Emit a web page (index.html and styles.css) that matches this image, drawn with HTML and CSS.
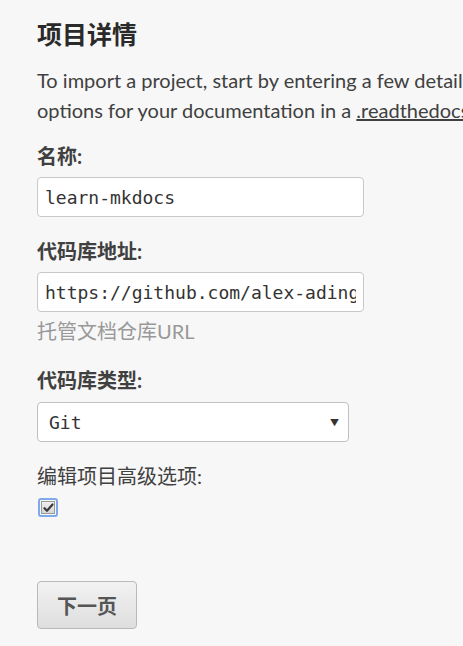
FILE: index.html
```html
<!DOCTYPE html>
<html lang="zh">
<head>
<meta charset="utf-8">
<title>项目详情</title>
<link rel="stylesheet" href="styles.css">
</head>
<body>
<main class="page">
  <h2 class="title">项目详情</h2>
  <p class="intro">To import a project, start by entering a few details about your repository. You can configure additional<br>options for your documentation in a <a href="#" class="link">.readthedocs.yaml</a> file later on.</p>

  <form class="form">
    <div class="field">
      <label class="label" for="name">名称:</label>
      <input class="input" id="name" type="text" value="learn-mkdocs">
    </div>

    <div class="field">
      <label class="label" for="repo">代码库地址:</label>
      <input class="input" id="repo" type="text" value="https://github.com/alex-adinger/learn-mkdocs">
      <span class="help">托管文档仓库URL</span>
    </div>

    <div class="field">
      <label class="label" for="type">代码库类型:</label>
      <div class="select" id="type">
        <span class="select-value">Git</span>
        <span class="select-arrow">▼</span>
      </div>
    </div>

    <div class="field">
      <span class="label label-plain">编辑项目高级选项:</span>
      <span class="checkbox">
        <span class="checkbox-box">
          <svg width="11" height="10" viewBox="0 0 11 10"><path d="M1.5 5.2 L4 7.8 L9.5 1.5" fill="none" stroke="#3a3a3a" stroke-width="2.2" stroke-linecap="round" stroke-linejoin="round"/></svg>
        </span>
      </span>
    </div>

    <div class="actions">
      <button type="button" class="button">下一页</button>
    </div>
  </form>
</main>
</body>
</html>
```

FILE: styles.css
```css
html, body {
  margin: 0;
  padding: 0;
}
body {
  background: #f7f7f7;
  color: #404040;
  font-family: Lato, "Noto Sans CJK SC", sans-serif;
  font-size: 20px;
  overflow: hidden;
  width: 463px;
  height: 646px;
}
.page {
  padding: 19px 0 0 37px;
  width: 900px;
}
.title {
  margin: 0;
  font-size: 25px;
  line-height: 30px;
  font-weight: 700;
  color: #2a2a2a;
}
.intro {
  margin: 16px 0 16px;
  line-height: 30px;
  white-space: nowrap;
  color: #404040;
}
.link {
  color: #404040;
  text-decoration: underline;
}
.form {
  display: flex;
  flex-direction: column;
}
.field {
  display: flex;
  flex-direction: column;
  align-items: flex-start;
}
.field + .field {
  margin-top: 19px;
}
.label {
  font-size: 20px;
  font-weight: 700;
  line-height: 30px;
  color: #404040;
}
.label-plain {
  font-weight: 400;
}
.input {
  box-sizing: border-box;
  width: 327px;
  height: 40px;
  margin: 6px 0 0;
  padding: 0 7px;
  border: 1px solid #c8c8c8;
  border-radius: 4px;
  background: #fff;
  font-family: "DejaVu Sans Mono", monospace;
  font-size: 18px;
  color: #333;
}
.help {
  margin-top: 4px;
  font-size: 20px;
  line-height: 30px;
  color: #999;
}
.select {
  box-sizing: border-box;
  width: 312px;
  height: 40px;
  margin-top: 7px;
  padding: 0 9px 0 11px;
  border: 1px solid #c0c0c0;
  border-radius: 4px;
  background: #fff;
  display: flex;
  align-items: center;
  justify-content: space-between;
}
.select-value {
  font-family: "DejaVu Sans Mono", monospace;
  font-size: 18px;
  color: #333;
}
.select-arrow {
  font-size: 9px;
  color: #333;
}
.checkbox {
  margin: 7px 0 0 1px;
  box-sizing: border-box;
  width: 20px;
  height: 19px;
  border: 2px solid #7ea9ea;
  border-radius: 3px;
  display: flex;
  align-items: center;
  justify-content: center;
}
.checkbox-box {
  box-sizing: border-box;
  width: 14px;
  height: 13px;
  border: 1px solid #9a9a9a;
  background: linear-gradient(#f0f0f0, #d6d6d6);
  display: flex;
  align-items: center;
  justify-content: center;
}
.actions {
  margin-top: 64px;
}
.button {
  box-sizing: border-box;
  width: 100px;
  height: 48px;
  border: 1px solid #b9b9b9;
  border-radius: 4px;
  background: linear-gradient(#f2f2f2, #dedede);
  font-family: Lato, "Noto Sans CJK SC", sans-serif;
  font-size: 20px;
  font-weight: 700;
  color: #555;
  padding: 0;
}
```
